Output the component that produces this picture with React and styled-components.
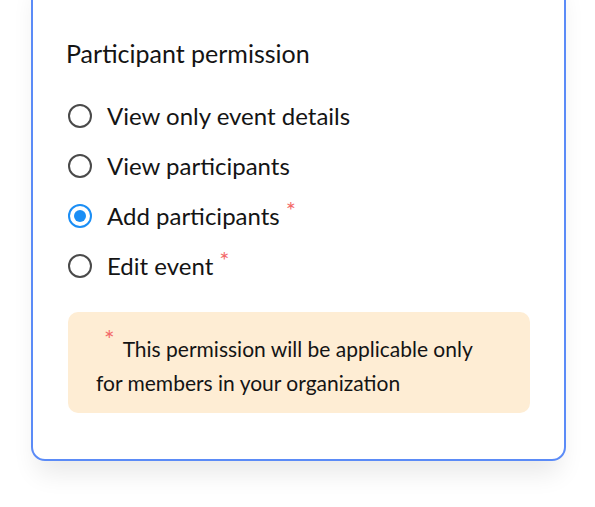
import styled, { createGlobalStyle } from "styled-components";

const GlobalStyle = createGlobalStyle`
  html, body {
    margin: 0;
    padding: 0;
    background: #ffffff;
  }
  body {
    font-family: Lato, "Noto Sans", sans-serif;
    color: #141414;
    overflow: hidden;
  }
`;

const Page = styled.div`
  width: 595px;
  height: 507px;
  overflow: hidden;
`;

const Card = styled.section`
  box-sizing: border-box;
  margin: -30px 0 0 31px;
  width: 535px;
  padding: 66px 33px 46px 33px;
  border: 2px solid #5b8bf7;
  border-radius: 14px;
  background: #fff;
  box-shadow: 0 18px 26px -6px rgba(0, 0, 0, 0.09);
`;

const Title = styled.h3`
  margin: 0 0 32px;
  font-size: 25px;
  font-weight: 400;
  line-height: 30px;
`;

const Options = styled.div`
  display: flex;
  flex-direction: column;
  gap: 18px;
`;

const Option = styled.label`
  display: flex;
  align-items: center;
  gap: 15px;
  padding-left: 2px;
  height: 32px;
  font-size: 24px;
  line-height: 32px;
  cursor: pointer;
`;

const Radio = styled.span`
  box-sizing: border-box;
  width: 24px;
  height: 24px;
  border-radius: 50%;
  border: 2px solid ${({ $checked }) => ($checked ? "#1b8ef5" : "#4a4a4a")};
  display: flex;
  align-items: center;
  justify-content: center;
  flex-shrink: 0;

  &::after {
    content: "";
    width: 12px;
    height: 12px;
    border-radius: 50%;
    background: #1b8ef5;
    display: ${({ $checked }) => ($checked ? "block" : "none")};
  }
`;

const Star = styled.span`
  color: #f36a6a;
  font-size: 24px;
  position: relative;
  top: -6px;
  margin-left: 6px;
`;

const Note = styled.div`
  margin: 30px 1px 0 2px;
  padding: 18px 20px 13px 28px;
  border-radius: 10px;
  background: #feedd4;
  font-size: 21px;
  line-height: 34px;
`;

const NoteStar = styled.span`
  color: #f36a6a;
  font-size: 25px;
  position: relative;
  top: -8px;
  margin: 0 8px 0 8px;
`;

const options = [
  { label: "View only event details" },
  { label: "View participants" },
  { label: "Add participants", checked: true, star: true },
  { label: "Edit event", star: true },
];

export default function App() {
  return (
    <Page>
      <GlobalStyle />
      <Card>
        <Title>Participant permission</Title>
        <Options>
          {options.map((o) => (
            <Option key={o.label}>
              <Radio $checked={o.checked} />
              <span>
                {o.label}
                {o.star && <Star>*</Star>}
              </span>
            </Option>
          ))}
        </Options>
        <Note>
          <NoteStar>*</NoteStar>This permission will be applicable only
          <br />
          for members in your organization
        </Note>
      </Card>
    </Page>
  );
}
